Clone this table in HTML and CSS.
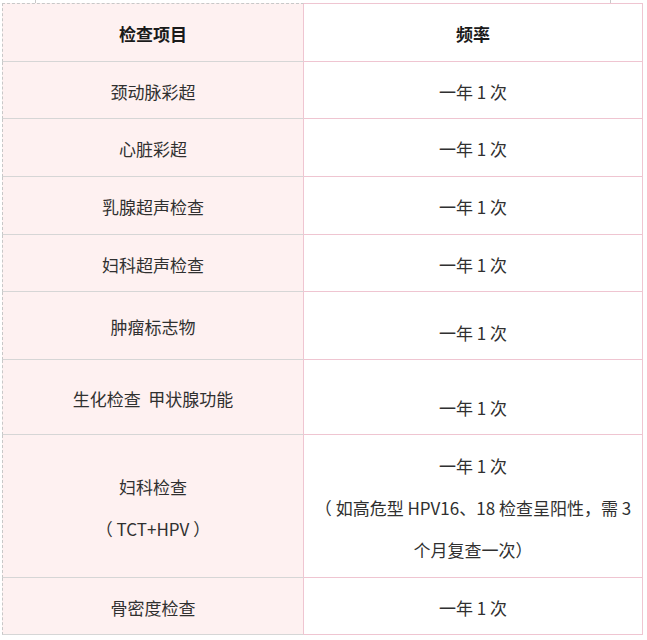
FILE: index.html
```html
<!DOCTYPE html>
<html lang="zh-CN">
<head>
<meta charset="utf-8">
<title>检查项目</title>
<link rel="stylesheet" href="styles.css">
</head>
<body>
<div class="marks"><span class="mark"></span><span class="mark"></span></div>
<div class="table">
  <div class="row head">
    <div class="cell item">检查项目</div>
    <div class="cell freq">频率</div>
  </div>
  <div class="row h57">
    <div class="cell item">颈动脉彩超</div>
    <div class="cell freq">一年 1 次</div>
  </div>
  <div class="row h58">
    <div class="cell item">心脏彩超</div>
    <div class="cell freq">一年 1 次</div>
  </div>
  <div class="row h58">
    <div class="cell item">乳腺超声检查</div>
    <div class="cell freq">一年 1 次</div>
  </div>
  <div class="row h57">
    <div class="cell item">妇科超声检查</div>
    <div class="cell freq">一年 1 次</div>
  </div>
  <div class="row h68">
    <div class="cell item">肿瘤标志物</div>
    <div class="cell freq low1">一年 1 次</div>
  </div>
  <div class="row h75">
    <div class="cell item">生化检查&nbsp;&nbsp;甲状腺功能</div>
    <div class="cell freq low2">一年 1 次</div>
  </div>
  <div class="row h143">
    <div class="cell item">
      <div>妇科检查</div>
      <div>（ TCT+HPV ）</div>
    </div>
    <div class="cell freq">
      <div>一年 1 次</div>
      <div>（ 如高危型 HPV16、18 检查呈阳性，需 3 个月复查一次）</div>
    </div>
  </div>
  <div class="row h57">
    <div class="cell item">骨密度检查</div>
    <div class="cell freq">一年 1 次</div>
  </div>
</div>
</body>
</html>
```
FILE: styles.css
```css
body {
  margin: 0;
  background: #ffffff;
  font-family: "Noto Sans CJK SC", "Noto Sans", sans-serif;
  font-size: 17px;
  color: #303030;
}

.marks {
  height: 3px;
  display: flex;
  justify-content: space-between;
  padding: 0 36px 0 35px;
}

.mark {
  width: 0;
  border-left: 1px dashed #c8c8c8;
}

.table {
  margin-left: 2px;
  width: 641px;
}

.row {
  display: grid;
  grid-template-columns: 302px 339px;
}

.head { height: 59px; font-weight: bold; color: #1a1a1a; }
.h57 { height: 57px; }
.h58 { height: 58px; }
.h68 { height: 68px; }
.h75 { height: 75px; }
.h143 { height: 143px; }

.cell {
  box-sizing: border-box;
  display: flex;
  flex-direction: column;
  align-items: center;
  justify-content: center;
  text-align: center;
  line-height: 42px;
  padding: 3px 8px 0;
}

.item {
  background: #fef1f1;
  border-left: 1px dashed #c8c8c8;
  border-right: 1px solid #efc5d1;
  border-bottom: 1px solid #d6d6d6;
}

.freq {
  border-right: 1px solid #efc5d1;
  border-bottom: 1px solid #efc5d1;
}

.head .item { border-top: 1px dashed #c8c8c8; }
.head .freq { border-top: 1px solid #efc5d1; }

.low1 { padding-top: 14px; }
.low2 { padding-top: 22px; }
```
